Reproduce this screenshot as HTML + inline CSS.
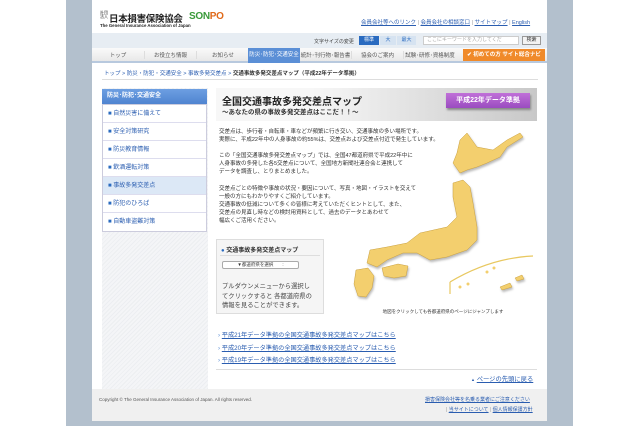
<!DOCTYPE html>
<html><head><meta charset="utf-8"><style>
*{margin:0;padding:0;box-sizing:border-box}
body{width:640px;height:426px;background:#fff;position:relative;overflow:hidden;font-family:"Liberation Sans","Noto Sans CJK JP",sans-serif;color:#333}
.a{position:absolute;white-space:nowrap}
.lk{color:#2a5db0;text-decoration:underline}
</style></head><body>
<div class="a" style="left:66px;top:0;width:507px;height:426px;background:#b3c0cd"></div>
<div class="a" style="left:92px;top:0;width:455px;height:421px;background:#fff"></div>
<!-- header -->
<div class="a" style="left:100px;top:11px;font-size:4px;line-height:4px;color:#333">社団<br>法人</div>
<div class="a" style="left:109px;top:11px;font-size:9.5px;font-weight:bold;color:#222;letter-spacing:-0.3px">日本損害保険協会</div>
<div class="a" style="left:100px;top:23px;font-size:4.3px;font-weight:bold;color:#222">The General Insurance Association of Japan</div>
<div class="a" style="left:189px;top:11px;font-size:10px;font-weight:bold;color:#3a9a3a;letter-spacing:-0.3px">SON<span style="color:#e06a1a">PO</span></div>
<div class="a" style="left:361px;top:18px;font-size:5.5px" ><span class="lk">会員会社等へのリンク</span> <span style="color:#999">|</span> <span class="lk">会員会社の相談窓口</span> <span style="color:#999">|</span> <span class="lk">サイトマップ</span> <span style="color:#999">|</span> <span class="lk">English</span></div>
<div class="a" style="left:92px;top:33px;width:455px;height:15px;background:#e7edf3"></div>
<div class="a" style="left:314px;top:38px;font-size:5px;color:#444">文字サイズの変更</div>
<div class="a" style="left:359px;top:36px;width:20px;height:9px;background:#2a6bc0;color:#fff;font-size:5px;text-align:center;line-height:9px">標準</div>
<div class="a" style="left:380px;top:36px;width:16px;height:9px;background:#d6e3f1;color:#2a6bc0;font-size:5px;text-align:center;line-height:9px">大</div>
<div class="a" style="left:397px;top:36px;width:19px;height:9px;background:#d6e3f1;color:#2a6bc0;font-size:5px;text-align:center;line-height:9px">最大</div>
<div class="a" style="left:423px;top:36px;width:96px;height:9px;background:#fff;border:1px solid #ccc;font-size:5px;color:#aaa;padding-left:3px;line-height:7px">ここにキーワードを入力してくだ</div>
<div class="a" style="left:522px;top:36px;width:19px;height:9px;background:#f3f3f3;border:1px solid #999;font-size:5px;text-align:center;line-height:7px">検索</div>
<div class="a" style="left:92px;top:48px;width:455px;height:15px;background:linear-gradient(#fafafa,#e8e8e8);border-bottom:2px solid #b8c9de"></div>
<div class="a" style="left:92px;top:51px;font-size:5.5px;color:#555;display:flex">
<span style="width:53px;text-align:center;border-right:1px solid #ddd">トップ</span>
<span style="width:52px;text-align:center;border-right:1px solid #ddd">お役立ち情報</span>
<span style="width:52px;text-align:center">お知らせ</span></div>
<div class="a" style="left:248px;top:48px;width:52px;height:15px;background:#5b8fd6;color:#fff;font-size:5.5px;text-align:center;line-height:15px">防災･防犯･交通安全</div>
<div class="a" style="left:300px;top:51px;font-size:5.5px;color:#555;display:flex">
<span style="width:52px;text-align:center;border-right:1px solid #ddd">統計･刊行物･報告書</span>
<span style="width:52px;text-align:center;border-right:1px solid #ddd">協会のご案内</span>
<span style="width:52px;text-align:center">試験･研修･資格制度</span></div>
<div class="a" style="left:463px;top:49px;width:82px;height:12px;background:#f08a2a;color:#fff;font-size:5.5px;font-weight:bold;text-align:center;line-height:12px">✔ 初めての方 サイト総合ナビ</div>
<div class="a" style="left:104px;top:69px;font-size:5.5px;color:#2a5db0">トップ &gt; 防災・防犯・交通安全 &gt; 事故多発交差点 &gt; <b style="color:#333">交通事故多発交差点マップ（平成22年データ準拠）</b></div>
<div class="a" style="left:102px;top:79px;width:436px;height:1px;background:#ddd"></div>
<!-- sidebar -->
<div class="a" style="left:102px;top:88px;width:106px;height:301px;background:repeating-linear-gradient(135deg,#f4f5f7 0 2px,#eceef1 2px 3px)"></div>
<div class="a" style="left:102px;top:89px;width:105px;height:15px;background:linear-gradient(#6d9fe2,#4f84d0);color:#fff;font-size:6px;font-weight:bold;padding-left:5px;line-height:15px">防災･防犯･交通安全</div>
<div class="a" style="left:102px;top:104px;width:105px;background:#fff;border:1px solid #ccd;font-size:6px;color:#2a5db0">
<div style="height:18px;line-height:18px;border-bottom:1px solid #dde;padding-left:5px"><span style="color:#2a6bc0">■</span> 自然災害に備えて</div>
<div style="height:18px;line-height:18px;border-bottom:1px solid #dde;padding-left:5px"><span style="color:#2a6bc0">■</span> 安全対策研究</div>
<div style="height:18px;line-height:18px;border-bottom:1px solid #dde;padding-left:5px"><span style="color:#2a6bc0">■</span> 防災教育情報</div>
<div style="height:18px;line-height:18px;border-bottom:1px solid #dde;padding-left:5px"><span style="color:#2a6bc0">■</span> 飲酒運転対策</div>
<div style="height:18px;line-height:18px;border-bottom:1px solid #dde;padding-left:5px;background:#dce8f6"><span style="color:#2a6bc0">■</span> 事故多発交差点</div>
<div style="height:18px;line-height:18px;border-bottom:1px solid #dde;padding-left:5px"><span style="color:#2a6bc0">■</span> 防犯のひろば</div>
<div style="height:18px;line-height:18px;padding-left:5px"><span style="color:#2a6bc0">■</span> 自動車盗難対策</div>
</div>
<!-- banner -->
<div class="a" style="left:216px;top:88px;width:321px;height:33px;background:linear-gradient(90deg,#f7f7f7 30%,#dcdcdc 70%,#c8c8c8)"></div>
<div class="a" style="left:222px;top:93px;font-size:10px;font-weight:bold;color:#222">全国交通事故多発交差点マップ</div>
<div class="a" style="left:222px;top:106px;font-size:6.5px;font-weight:bold;color:#333">～あなたの県の事故多発交差点はここだ！！～</div>
<div class="a" style="left:446px;top:93px;width:84px;height:15px;background:linear-gradient(#c070d8,#9a4cc0);color:#fff;font-size:7px;font-weight:bold;text-align:center;line-height:15px;box-shadow:1px 2px 2px #888">平成22年データ準拠</div>
<div class="a" style="left:219px;top:128px;font-size:5.5px;line-height:8.1px;color:#333">交差点は、歩行者・自転車・車などが頻繁に行き交い、交通事故の多い場所です。<br>実際に、平成22年中の人身事故の約55%は、交差点および交差点付近で発生しています。<br><br>この「全国交通事故多発交差点マップ」では、全国47都道府県で平成22年中に<br>人身事故の多発した各5交差点について、全国地方新聞社連合会と連携して<br>データを調査し、とりまとめました。<br><br>交差点ごとの特徴や事故の状況・要因について、写真・地図・イラストを交えて<br>一般の方にもわかりやすくご紹介しています。<br>交通事故の低減について多くの皆様に考えていただくヒントとして、また、<br>交差点の見直し時などの検討用資料として、過去のデータとあわせて<br>幅広くご活用ください。</div>
<!-- map -->
<svg class="a" style="left:330px;top:125px" width="210" height="200" viewBox="330 125 210 200">
<g fill="#f3cf6e" stroke="#c9a040" stroke-width="0.5" style="filter:drop-shadow(1px 2px 1px #bbb)">
<polygon points="460,140 467,133 477,147 493,150 507,140 520,133 523,137 507,147 500,157 487,163 477,167 467,170 460,173 453,163 457,153"/>
<polygon points="453,183 463,180 470,187 473,203 477,227 477,240 467,250 447,257 430,260 417,253 403,253 387,260 377,267 367,263 370,250 387,247 407,243 420,233 447,227 457,217 453,197"/>
<polygon points="382,268 398,264 408,266 406,276 394,278 384,276"/>
<polygon points="356,270 368,268 374,276 372,288 366,297 358,296 354,284"/>
<polygon points="500,287 510,283 512,287 502,290"/><polygon points="515,278 522,275 524,279 517,281"/>
</g>
<g fill="none" stroke="#e8c860" stroke-width="1.2"><path d="M450,282 L450,294"/><path d="M450,282 Q490,258 533,256"/></g>
<g fill="#f3cf6e"><circle cx="460" cy="287" r="1.5"/><circle cx="468" cy="284" r="1.5"/><circle cx="487" cy="272" r="1.5"/><circle cx="494" cy="268" r="1.5"/></g>
<text x="443" y="313" font-size="4.5" font-family="Liberation Sans,Noto Sans CJK JP,sans-serif" text-anchor="middle" fill="#333">地図をクリックしても各都道府県のページにジャンプします</text>
</svg>
<!-- select box -->
<div class="a" style="left:216px;top:239px;width:108px;height:75px;background:#f5f5f5;border:1px solid #ddd"></div>
<div class="a" style="left:221px;top:245px;font-size:6px;font-weight:bold;color:#333"><span style="color:#2a6bc0">●</span> 交通事故多発交差点マップ</div>
<div class="a" style="left:220px;top:255px;width:100px;height:1px;background:#ddd"></div>
<div class="a" style="left:222px;top:261px;width:77px;height:8px;background:#fff;border:1px solid #aaa;border-radius:2px;font-size:4.5px;line-height:6px;text-align:center">▼都道府県を選択　　:</div>
<div class="a" style="left:222px;top:282px;font-size:6.3px;line-height:9.5px;color:#444">プルダウンメニューから選択し<br>てクリックすると 各都道府県の<br>情報を見ることができます。</div>
<div class="a" style="left:218px;top:330px;font-size:6.2px;line-height:12.5px;color:#2a5db0"><span style="color:#5b8fd6">›</span> <span class="lk">平成21年データ準拠の全国交通事故多発交差点マップはこちら</span><br><span style="color:#5b8fd6">›</span> <span class="lk">平成20年データ準拠の全国交通事故多発交差点マップはこちら</span><br><span style="color:#5b8fd6">›</span> <span class="lk">平成19年データ準拠の全国交通事故多発交差点マップはこちら</span></div>
<div class="a" style="left:216px;top:369px;width:321px;height:1px;background:#ddd"></div>
<div class="a" style="left:471px;top:374px;font-size:6.3px;color:#2a5db0"><span style="font-size:4px">▲</span> <span class="lk">ページの先頭に戻る</span></div>
<!-- footer -->
<div class="a" style="left:92px;top:389px;width:455px;height:32px;background:#f0f0f0"></div>
<div class="a" style="left:99px;top:397px;font-size:4.5px;color:#555">Copyright © The General Insurance Association of Japan. All rights reserved.</div>
<div class="a" style="left:425px;top:396px;font-size:5px;color:#2a5db0"><span class="lk">損害保険会社等を名乗る業者にご注意ください</span></div>
<div class="a" style="left:446px;top:406px;font-size:5px;color:#2a5db0"><span style="color:#999">|</span> <span class="lk">当サイトについて</span> <span style="color:#999">|</span> <span class="lk">個人情報保護方針</span></div>
</body></html>
